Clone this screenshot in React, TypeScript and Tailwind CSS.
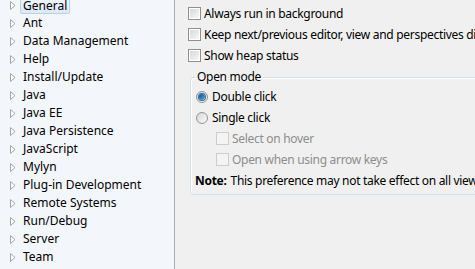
import * as React from "react";

const FONT = "font-['Segoe_UI','Noto_Sans',sans-serif]";

const treeItems = [
  "General",
  "Ant",
  "Data Management",
  "Help",
  "Install/Update",
  "Java",
  "Java EE",
  "Java Persistence",
  "JavaScript",
  "Mylyn",
  "Plug-in Development",
  "Remote Systems",
  "Run/Debug",
  "Server",
  "Team",
];

export default function App() {
  return (
    <div className={`flex h-[269px] w-[475px] overflow-hidden text-[12px] leading-[18px] text-black ${FONT}`}>
      <div className="w-[175px] shrink-0 overflow-hidden border-r border-[#a8aeb7] bg-[#f3f6fb]">
        <ul className="mt-[-4px]">
          {treeItems.map((item, i) => (
            <TreeRow key={item} label={item} selected={i === 0} />
          ))}
        </ul>
      </div>

      <div className="min-w-0 flex-1 overflow-hidden bg-[#f0f0f0] pl-[13px] pt-[3px] tracking-[-0.3px]">
        <CheckRow label="Always run in background" />
        <CheckRow label="Keep next/previous editor, view and perspectives dialog open" />
        <CheckRow label="Show heap status" />

        <fieldset className="ml-[2px] mr-[-20px] mt-[3px] rounded-[3px] border border-[#d5dfe5] px-[4px] pb-[3px] pt-[1px] shadow-[inset_1px_1px_0_#fff]">
          <legend className="px-[2px] leading-[16px]">Open mode</legend>
          <RadioRow label="Double click" checked />
          <RadioRow label="Single click" />
          <div className="pl-[21px]">
            <CheckRow label="Select on hover" disabled />
            <CheckRow label="Open when using arrow keys" disabled />
          </div>
          <div className="flex h-[21px] items-center whitespace-nowrap">
            <span className="font-bold">Note:</span>
            <span className="ml-[4px]">This preference may not take effect on all views</span>
          </div>
        </fieldset>
      </div>
    </div>
  );
}

function TreeRow({ label, selected }: { label: string; selected?: boolean }) {
  return (
    <li className="flex h-[18px] items-center whitespace-nowrap">
      <svg width="6" height="9" viewBox="0 0 6 9" className="ml-[10px] shrink-0">
        <path d="M0.5 0.5 L5 4.5 L0.5 8.5 Z" fill="#fff" stroke="#a6a6a6" strokeWidth="1" />
      </svg>
      <span
        className={
          selected
            ? "ml-[4px] h-[17px] rounded-[2px] border border-[#b9d1ef] bg-gradient-to-b from-[#f1f6fd] to-[#dde9f8] px-[2px] leading-[15px]"
            : "ml-[7px]"
        }
      >
        {label}
      </span>
    </li>
  );
}

function CheckRow({ label, disabled }: { label: string; disabled?: boolean }) {
  return (
    <div className="flex h-[21px] items-center whitespace-nowrap">
      <span
        className={
          disabled
            ? "flex h-[13px] w-[13px] shrink-0 border border-[#cdcdcd] bg-[#f4f4f4] p-[1px]"
            : "flex h-[13px] w-[13px] shrink-0 border border-[#8e8f8f] bg-white p-[1px]"
        }
      >
        <span
          className={
            disabled
              ? "flex-1 bg-[#f4f4f4]"
              : "flex-1 bg-gradient-to-br from-[#d9d9d9] to-[#f7f7f7]"
          }
        />
      </span>
      <span className={disabled ? "ml-[3px] text-[#8d8d8d]" : "ml-[3px]"}>{label}</span>
    </div>
  );
}

function RadioRow({ label, checked }: { label: string; checked?: boolean }) {
  return (
    <div className="flex h-[21px] items-center whitespace-nowrap">
      <span className="ml-[1px] flex h-[12px] w-[12px] shrink-0 items-center justify-center rounded-full border border-[#929292] bg-gradient-to-br from-[#d6d6d6] to-[#fbfbfb]">
        {checked && (
          <span className="h-[6px] w-[6px] rounded-full bg-gradient-to-br from-[#0d4a7a] to-[#5fb0e0] shadow-[0_0_0_1px_#2b6ea3]" />
        )}
      </span>
      <span className="ml-[4px]">{label}</span>
    </div>
  );
}
